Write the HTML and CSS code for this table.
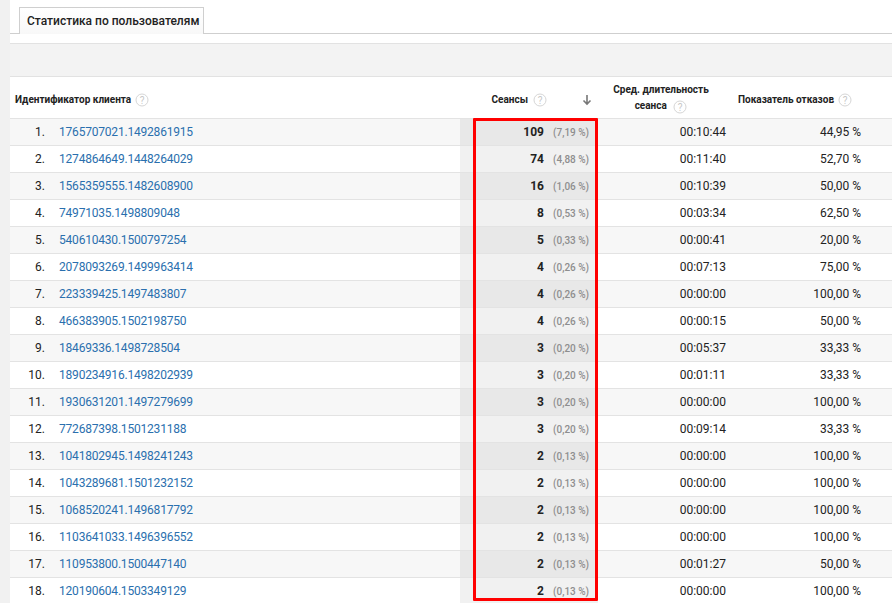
FILE: index.html
```html
<!DOCTYPE html>
<html lang="ru">
<head>
<meta charset="utf-8">
<link rel="stylesheet" href="styles.css">
</head>
<body>
<div class="page">
  <div class="strip"></div>
  <div class="main">
    <div class="tabs"><div class="tab">Статистика по пользователям</div></div>
    <div class="band"></div>
    <table class="grid">
      <colgroup><col class="c1"><col class="c2"><col class="c3"><col class="c4"></colgroup>
      <thead>
        <tr>
          <th class="h-id"><span>Идентификатор клиента</span><svg class="q" viewBox="0 0 14 14"><circle cx="7" cy="7" r="6" /><text x="7" y="10.5">?</text></svg></th>
          <th class="h-ses"><div class="hs"><span>Сеансы</span><svg class="q" viewBox="0 0 14 14"><circle cx="7" cy="7" r="6" /><text x="7" y="10.5">?</text></svg><svg class="arrow" viewBox="0 0 10 12"><path d="M5 1v9M1.5 6.5L5 10l3.5-3.5" /></svg></div></th>
          <th class="h-dur">Сред. длительность<br>сеанса <svg class="q" viewBox="0 0 14 14"><circle cx="7" cy="7" r="6" /><text x="7" y="10.5">?</text></svg></th>
          <th class="h-bnc"><span>Показатель отказов</span><svg class="q" viewBox="0 0 14 14"><circle cx="7" cy="7" r="6" /><text x="7" y="10.5">?</text></svg></th>
        </tr>
      </thead>
      <tbody>
        <tr><td><span class="n">1.</span><a>1765707021.1492861915</a></td><td class="s"><b>109</b><i>(7,19 %)</i></td><td class="t">00:10:44</td><td class="b">44,95 %</td></tr>
        <tr><td><span class="n">2.</span><a>1274864649.1448264029</a></td><td class="s"><b>74</b><i>(4,88 %)</i></td><td class="t">00:11:40</td><td class="b">52,70 %</td></tr>
        <tr><td><span class="n">3.</span><a>1565359555.1482608900</a></td><td class="s"><b>16</b><i>(1,06 %)</i></td><td class="t">00:10:39</td><td class="b">50,00 %</td></tr>
        <tr><td><span class="n">4.</span><a>74971035.1498809048</a></td><td class="s"><b>8</b><i>(0,53 %)</i></td><td class="t">00:03:34</td><td class="b">62,50 %</td></tr>
        <tr><td><span class="n">5.</span><a>540610430.1500797254</a></td><td class="s"><b>5</b><i>(0,33 %)</i></td><td class="t">00:00:41</td><td class="b">20,00 %</td></tr>
        <tr><td><span class="n">6.</span><a>2078093269.1499963414</a></td><td class="s"><b>4</b><i>(0,26 %)</i></td><td class="t">00:07:13</td><td class="b">75,00 %</td></tr>
        <tr><td><span class="n">7.</span><a>223339425.1497483807</a></td><td class="s"><b>4</b><i>(0,26 %)</i></td><td class="t">00:00:00</td><td class="b">100,00 %</td></tr>
        <tr><td><span class="n">8.</span><a>466383905.1502198750</a></td><td class="s"><b>4</b><i>(0,26 %)</i></td><td class="t">00:00:15</td><td class="b">50,00 %</td></tr>
        <tr><td><span class="n">9.</span><a>18469336.1498728504</a></td><td class="s"><b>3</b><i>(0,20 %)</i></td><td class="t">00:05:37</td><td class="b">33,33 %</td></tr>
        <tr><td><span class="n">10.</span><a>1890234916.1498202939</a></td><td class="s"><b>3</b><i>(0,20 %)</i></td><td class="t">00:01:11</td><td class="b">33,33 %</td></tr>
        <tr><td><span class="n">11.</span><a>1930631201.1497279699</a></td><td class="s"><b>3</b><i>(0,20 %)</i></td><td class="t">00:00:00</td><td class="b">100,00 %</td></tr>
        <tr><td><span class="n">12.</span><a>772687398.1501231188</a></td><td class="s"><b>3</b><i>(0,20 %)</i></td><td class="t">00:09:14</td><td class="b">33,33 %</td></tr>
        <tr><td><span class="n">13.</span><a>1041802945.1498241243</a></td><td class="s"><b>2</b><i>(0,13 %)</i></td><td class="t">00:00:00</td><td class="b">100,00 %</td></tr>
        <tr><td><span class="n">14.</span><a>1043289681.1501232152</a></td><td class="s"><b>2</b><i>(0,13 %)</i></td><td class="t">00:00:00</td><td class="b">100,00 %</td></tr>
        <tr><td><span class="n">15.</span><a>1068520241.1496817792</a></td><td class="s"><b>2</b><i>(0,13 %)</i></td><td class="t">00:00:00</td><td class="b">100,00 %</td></tr>
        <tr><td><span class="n">16.</span><a>1103641033.1496396552</a></td><td class="s"><b>2</b><i>(0,13 %)</i></td><td class="t">00:00:00</td><td class="b">100,00 %</td></tr>
        <tr><td><span class="n">17.</span><a>110953800.1500447140</a></td><td class="s"><b>2</b><i>(0,13 %)</i></td><td class="t">00:01:27</td><td class="b">50,00 %</td></tr>
        <tr><td><span class="n">18.</span><a>120190604.1503349129</a></td><td class="s"><b>2</b><i>(0,13 %)</i></td><td class="t">00:00:00</td><td class="b">100,00 %</td></tr>
      </tbody>
    </table>
    <div class="highlight"></div>
  </div>
</div>
</body>
</html>
```

FILE: styles.css
```css
* { box-sizing: border-box; }
html, body { margin: 0; padding: 0; background: #fff; }
body { font-family: Roboto, "Liberation Sans", Arial, sans-serif; color: #222; }
.page { display: flex; min-height: 603px; }
.strip { width: 10px; flex: none; background: #f1f1f1; }
.main { flex: 1; position: relative; }
.tabs { height: 34px; padding: 7px 0 0 9px; border-bottom: 1px solid #cfcfcf; }
.tab {
  width: 185px; height: 27px; border: 1px solid #cfcfcf; border-bottom: none;
  background: linear-gradient(#ffffff, #f8f8f8);
  font-size: 12px; font-weight: 500; line-height: 26px; padding-left: 7px; color: #222;
  margin-bottom: -1px;
}
.band { margin-top: 9px; height: 34px; background: #f3f3f3; border-top: 1px solid #e2e2e2; border-bottom: 1px solid #e2e2e2; }
.grid { border-collapse: collapse; table-layout: fixed; width: 882px; }
.c1 { width: 450px; } .c2 { width: 138px; } .c3 { width: 140px; } .c4 { width: 154px; }
th { font-size: 10px; font-weight: 700; color: #222; height: 41px; padding: 0; vertical-align: middle; line-height: 16px; }
.h-id { text-align: left; padding-left: 5px; padding-top: 5px; }
.h-id span, .h-bnc span { vertical-align: middle; }
.q { width: 14px; height: 14px; vertical-align: middle; margin-left: 4px; }
.q circle { fill: none; stroke: #d6d6d6; stroke-width: 1; }
.q text { font-family: Roboto, sans-serif; font-size: 10px; fill: #c8c8c8; text-anchor: middle; font-weight: 400; }
.h-ses { padding-right: 6px; padding-top: 5px; }
.hs { display: flex; justify-content: flex-end; align-items: center; }
.hs .q { margin-left: 5px; }
.arrow { width: 10px; height: 12px; margin-left: 35px; }
.arrow path { fill: none; stroke: #777; stroke-width: 1.6; }
.h-dur { text-align: center; padding-right: 14px; padding-top: 2px; line-height: 16px; }
.h-bnc { text-align: left; padding-left: 0; padding-top: 5px; }
tbody tr { height: 27px; border-top: 1px solid #e3e3e3; }
tbody tr:nth-child(odd) { background: #f7f7f7; }
td { font-size: 12px; padding: 0; height: 26px; vertical-align: middle; white-space: nowrap; }
.n { display: inline-block; width: 35px; text-align: right; color: #222; }
td a { color: #2a6fae; margin-left: 14px; text-decoration: none; letter-spacing: -0.2px; }
.s { text-align: right; padding-right: 9px; background: #f1f1f1; }
tbody tr:nth-child(odd) .s { background: #e8e8e8; }
.s b { font-weight: 700; color: #222; }
.s i { font-style: normal; font-size: 10px; font-weight: 500; color: #8e8e8e; display: inline-block; width: 36px; text-align: right; margin-left: 9px; }
.t { text-align: right; padding-right: 12px; }
.b { text-align: right; padding-right: 31px; }
.highlight { position: absolute; left: 463px; top: 118px; width: 125px; height: 483px; border: 3px solid #ff0000; border-radius: 1px; }
```
